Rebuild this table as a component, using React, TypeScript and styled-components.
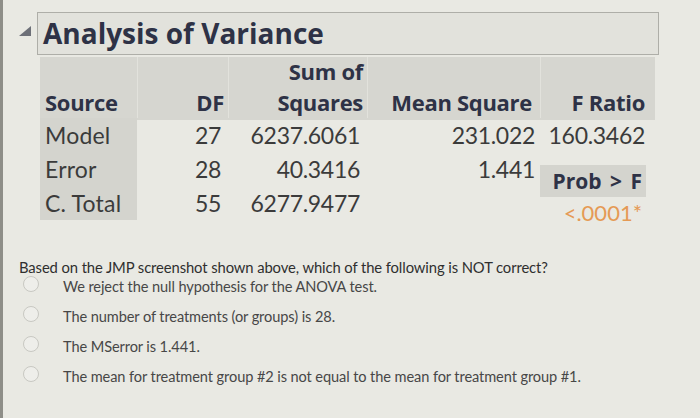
import styled, { createGlobalStyle } from 'styled-components';

const Global = createGlobalStyle`
  body {
    margin: 0;
    background: #e8e8e2;
  }
`;

const rows = [
  { source: 'Model', df: '27', ss: '6237.6061', ms: '231.022' },
  { source: 'Error', df: '28', ss: '40.3416', ms: '1.441' },
  { source: 'C. Total', df: '55', ss: '6277.9477', ms: '' },
];

const options = [
  'We reject the null hypothesis for the ANOVA test.',
  'The number of treatments (or groups) is 28.',
  'The MSerror is 1.441.',
  'The mean for treatment group #2 is not equal to the mean for treatment group #1.',
];

const App = () => {
  return (
    <>
      <Global />
      <Page>
        <TitleRow>
          <Toggle viewBox="0 0 14 12">
            <path d="M13 1 L13 11 L1 11 Z" fill="#6d7078" />
          </Toggle>
          <TitleBox>Analysis of Variance</TitleBox>
        </TitleRow>

        <Table>
          <Head $col={1}>Source</Head>
          <Head $col={2}>DF</Head>
          <Head $col={3}>
            <span>Sum of</span>
            <span>Squares</span>
          </Head>
          <Head $col={4}>Mean Square</Head>
          <Head $col={5}>F Ratio</Head>

          {rows.map((r) => (
            <Row key={r.source}>
              <SourceCell>{r.source}</SourceCell>
              <Num $w={84}>{r.df}</Num>
              <Num $w={132}>{r.ss}</Num>
              <Num $w={168}>{r.ms}</Num>
            </Row>
          ))}

          <FCol>
            <Num $w={105}>160.3462</Num>
            <ProbBox>Prob &gt; F</ProbBox>
            <PValue>&lt;.0001*</PValue>
          </FCol>
        </Table>

        <Question>
          Based on the JMP screenshot shown above, which of the following is NOT correct?
        </Question>
        <Options>
          {options.map((o) => (
            <Option key={o}>
              <Radio />
              <span>{o}</span>
            </Option>
          ))}
        </Options>
      </Page>
    </>
  );
};

export default App;

const Page = styled.div`
  width: 700px;
  height: 418px;
  box-sizing: border-box;
  border-left: 3px solid #8e8e88;
  background: #e9e9e3;
  font-family: Lato, 'Liberation Sans', sans-serif;
  overflow: hidden;
`;

const TitleRow = styled.div`
  display: flex;
  align-items: center;
  gap: 5px;
  padding: 12px 0 0 15px;
`;

const Toggle = styled.svg`
  width: 14px;
  height: 12px;
  margin-top: -6px;
`;

const TitleBox = styled.div`
  width: 622px;
  height: 43px;
  box-sizing: border-box;
  border: 1px solid #aeaea8;
  background: #e2e2dc;
  padding: 0 0 0 5px;
  font-family: 'Open Sans', Lato, sans-serif;
  font-size: 28px;
  font-weight: 700;
  color: #2e3246;
  line-height: 40px;
  letter-spacing: 0;
`;

const Table = styled.div`
  display: grid;
  grid-template-columns: 97px 91px 139px 173px 115px;
  grid-template-rows: 61px 34px 34px 34px;
  width: 615px;
  margin: 2px 0 0 37px;
  background: linear-gradient(#d6d6d0, #d6d6d0) no-repeat;
  background-size: 100% 63px;
`;

const Head = styled.div<{ $col: number }>`
  grid-column: ${(p) => p.$col};
  grid-row: 1;
  display: flex;
  flex-direction: column;
  justify-content: flex-end;
  align-items: ${(p) => (p.$col > 1 ? 'flex-end' : 'flex-start')};
  padding: 0 ${(p) => (p.$col === 5 ? 10 : p.$col === 4 ? 8 : 4)}px 0 5px;
  border-left: ${(p) => (p.$col > 1 ? '1px solid #e2e2dc' : 'none')};
  font-family: 'Open Sans', Lato, sans-serif;
  font-size: 22px;
  font-weight: 700;
  color: #2e3246;
  line-height: 31px;
  letter-spacing: -0.3px;
`;

const Row = styled.div`
  display: contents;
`;

const SourceCell = styled.div`
  grid-column: 1;
  background: #d4d4ce;
  padding: 0 5px;
  font-size: 23px;
  color: #3b3b3b;
  line-height: 34px;
  letter-spacing: 0.2px;
`;

const Num = styled.div<{ $w: number }>`
  width: ${(p) => p.$w}px;
  text-align: right;
  font-size: 23px;
  color: #3b3b3b;
  line-height: 34px;
  letter-spacing: -0.3px;
`;

const FCol = styled.div`
  grid-column: 5;
  grid-row: 2 / 5;
  display: flex;
  flex-direction: column;
  align-items: flex-start;
`;

const ProbBox = styled.div`
  width: 106px;
  height: 32px;
  box-sizing: border-box;
  margin-top: 13px;
  background: #d4d4ce;
  text-align: right;
  padding-right: 4px;
  font-family: 'Open Sans', Lato, sans-serif;
  font-size: 21px;
  font-weight: 700;
  color: #2e3246;
  line-height: 32px;
  word-spacing: 3px;
`;

const PValue = styled.div`
  width: 102px;
  text-align: right;
  font-size: 22px;
  color: #e59a55;
  line-height: 30px;
  margin-top: 1px;
`;

const Question = styled.p`
  margin: 38px 0 0 16px;
  font-size: 14.8px;
  color: #2f2f2f;
  line-height: 18px;
  letter-spacing: -0.1px;
`;

const Options = styled.div`
  display: flex;
  flex-direction: column;
  gap: 12px;
  margin: 1px 0 0 20px;
`;

const Option = styled.label`
  display: flex;
  align-items: center;
  gap: 24px;
  height: 18px;
  font-size: 14.6px;
  color: #474747;
  letter-spacing: -0.1px;
`;

const Radio = styled.span`
  width: 14px;
  height: 14px;
  border-radius: 50%;
  border: 1px solid #c8c8c2;
  background: #eeeeea;
  margin-top: -4px;
`;
